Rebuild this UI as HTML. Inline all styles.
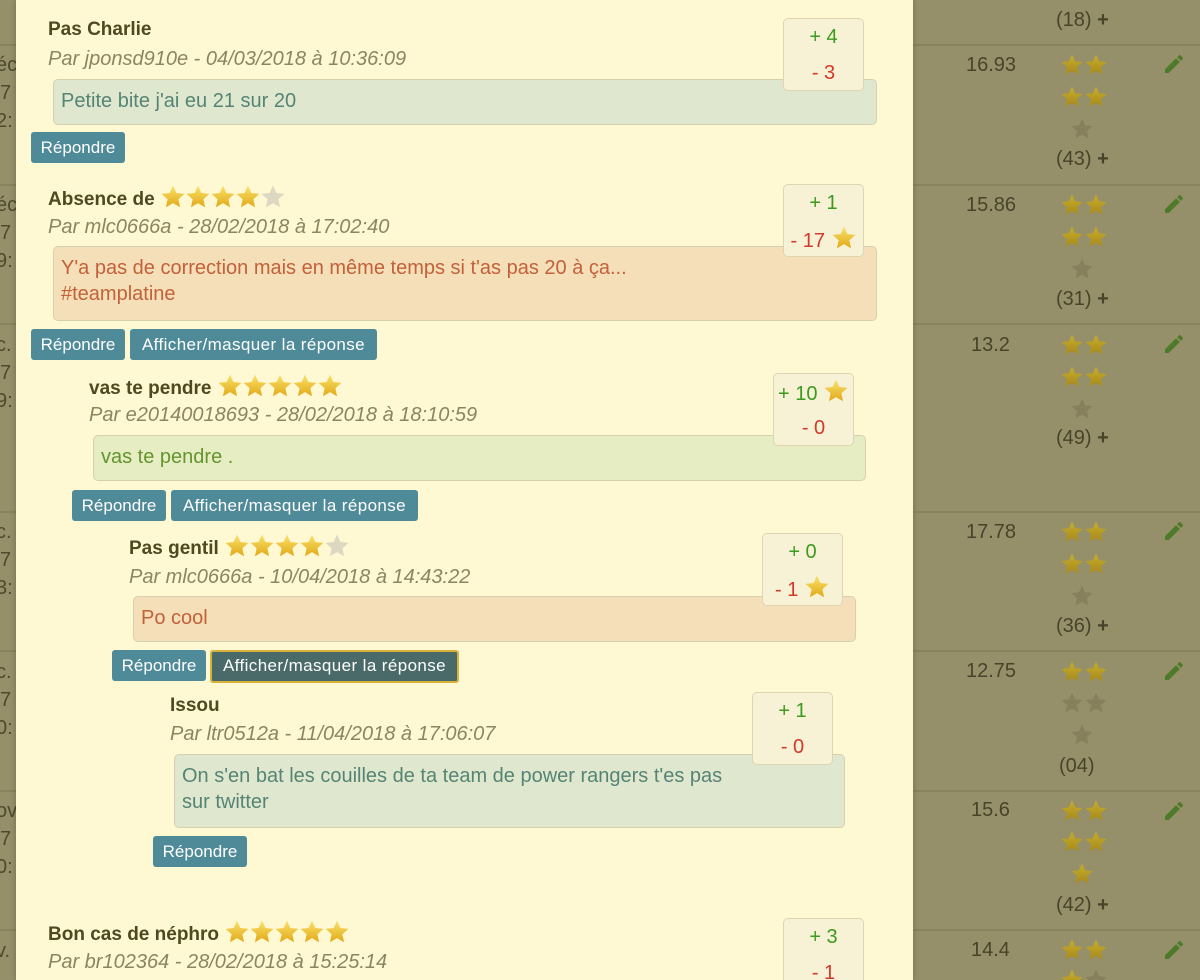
<!DOCTYPE html>
<html><head><meta charset="utf-8"><style>
*{box-sizing:border-box;margin:0;padding:0}
html{width:1200px;height:980px;overflow:hidden}
body{width:1200px;height:980px;overflow:hidden;background:#96906a;font-family:"Liberation Sans",sans-serif;position:relative}
.a{position:absolute;white-space:nowrap}
.modal{position:absolute;left:16px;top:0;width:897px;height:980px;background:#fef8d3;box-shadow:0 0 6px rgba(0,0,0,.25)}
.t{font-weight:bold;font-size:19px;color:#4f4920;line-height:24px}
.t svg{width:26px;height:26px;vertical-align:-5px;margin-right:-1px}
.m{font-style:italic;font-size:20px;color:#8b8560;line-height:24px}
.box{position:absolute;border:1px solid #d6d0ae;border-radius:5px;font-size:20px;line-height:26px;padding:8px 7px;white-space:nowrap;overflow:hidden}
.gb{background:#dfe8cf;color:#558475}
.ob{background:#f5dfb8;color:#c2613a}
.lb{background:#e6edc2;color:#64952e}
.btn{position:absolute;height:31px;background:#4f8a99;color:#fff;font-size:17px;line-height:31px;text-align:center;border-radius:3px;white-space:nowrap}
.b1{width:94px}
.b2{width:247px;letter-spacing:.4px}
.dk{background:#496a69;border:2px solid #d9b23d;line-height:27px}
.v{position:absolute;width:81px;height:73px;background:#f7f1d6;border:1px solid #ddd6b1;border-radius:5px;text-align:center;font-size:20px;white-space:nowrap}
.v .p{position:absolute;top:7px;left:0;right:0;color:#3c9a1f}
.v .n{position:absolute;top:43px;left:0;right:0;color:#d23a2a}
.v svg{width:26px;height:26px;vertical-align:-4px}
.gold{fill:url(#gg)}
.grey{fill:#dcd8c1}
.dg{fill:url(#dgg)}
.dgr{fill:#86815c}
.r{position:absolute;font-size:20px;color:#48442a}
.sep{position:absolute;left:913px;width:287px;height:2px;background:#8a845e}
.st{position:absolute;width:24px;height:24px}
.cnt{position:absolute;font-size:20px;color:#48442a}
.pen{position:absolute;width:24px;height:24px}
.lf{position:absolute;left:0;font-size:20px;color:#4e4a2e}
.lsep{position:absolute;left:0;width:16px;height:2px;background:#8a845e}
</style></head><body>
<svg style="position:absolute;width:0;height:0" xmlns="http://www.w3.org/2000/svg"><defs>
<linearGradient id="gg" x1="0" y1="0" x2="0" y2="1"><stop offset="0" stop-color="#f9e36a"/><stop offset="1" stop-color="#e2a818"/></linearGradient>
<linearGradient id="dgg" x1="0" y1="0" x2="0" y2="1"><stop offset="0" stop-color="#c7ae2c"/><stop offset="1" stop-color="#a88a1a"/></linearGradient>
<symbol id="s" viewBox="0 0 24 24"><polygon points="12,1.5 15.1,8.3 22.5,9.1 17,14.1 18.5,21.5 12,17.7 5.5,21.5 7,14.1 1.5,9.1 8.9,8.3" stroke-linejoin="round"/></symbol>
<symbol id="pn" viewBox="0 0 24 24"><path d="M3 17.25V21h3.75L17.81 9.94l-3.75-3.75L3 17.25zM20.71 7.04a1 1 0 000-1.41l-2.34-2.34a1 1 0 00-1.41 0l-1.830 1.83 3.75 3.75 1.83-1.83z" fill="#4e7a2a"/></symbol>
</defs></svg>

<div class="lsep" style="top:44px"></div><div class="lsep" style="top:184px"></div><div class="lsep" style="top:323px"></div><div class="lsep" style="top:511px"></div><div class="lsep" style="top:650px"></div><div class="lsep" style="top:790px"></div><div class="lsep" style="top:929px"></div>
<div class="lf" style="top:54px;left:-4px">éc</div><div class="lf" style="top:82px">7</div><div class="lf" style="top:110px;left:-4px">2:</div>
<div class="lf" style="top:194px;left:-4px">éc</div><div class="lf" style="top:222px">7</div><div class="lf" style="top:250px;left:-4px">9:</div>
<div class="lf" style="top:334px;left:-4px">c.</div><div class="lf" style="top:362px">7</div><div class="lf" style="top:390px;left:-4px">9:</div>
<div class="lf" style="top:521px;left:-4px">c.</div><div class="lf" style="top:549px">7</div><div class="lf" style="top:577px;left:-4px">3:</div>
<div class="lf" style="top:661px;left:-4px">c.</div><div class="lf" style="top:689px">7</div><div class="lf" style="top:717px;left:-4px">0:</div>
<div class="lf" style="top:800px;left:-4px">ov</div><div class="lf" style="top:828px">7</div><div class="lf" style="top:856px;left:-4px">0:</div>
<div class="lf" style="top:940px;left:-4px">v.</div>

<div class="sep" style="top:44px"></div><div class="sep" style="top:184px"></div><div class="sep" style="top:323px"></div><div class="sep" style="top:511px"></div><div class="sep" style="top:650px"></div><div class="sep" style="top:790px"></div><div class="sep" style="top:929px"></div>
<div class="cnt" style="left:1056px;top:9px">(18) <b>+</b></div>

<div class="modal"></div>

<div class="a t" style="left:48px;top:18px">Pas Charlie</div>
<div class="a m" style="left:48px;top:47px">Par jponsd910e - 04/03/2018 à 10:36:09</div>
<div class="box gb" style="left:53px;top:79px;width:824px;height:46px">Petite bite j'ai eu 21 sur 20</div>
<div class="v" style="left:783px;top:18px"><span class="p">+ 4</span><span class="n">- 3</span></div>
<div class="btn b1" style="left:31px;top:132px">Répondre</div>

<div class="a t" style="left:48px;top:184px">Absence de <svg class="gold"><use href="#s"/></svg><svg class="gold"><use href="#s"/></svg><svg class="gold"><use href="#s"/></svg><svg class="gold"><use href="#s"/></svg><svg class="grey"><use href="#s"/></svg></div>
<div class="a m" style="left:48px;top:215px">Par mlc0666a - 28/02/2018 à 17:02:40</div>
<div class="box ob" style="left:53px;top:246px;width:824px;height:75px">Y'a pas de correction mais en même temps si t'as pas 20 à ça...<br>#teamplatine</div>
<div class="v" style="left:783px;top:184px"><span class="p">+ 1</span><span class="n" style="top:40px">- 17 <svg class="gold"><use href="#s"/></svg></span></div>
<div class="btn b1" style="left:31px;top:329px">Répondre</div>
<div class="btn b2" style="left:130px;top:329px">Afficher/masquer la réponse</div>

<div class="a t" style="left:89px;top:373px">vas te pendre <svg class="gold"><use href="#s"/></svg><svg class="gold"><use href="#s"/></svg><svg class="gold"><use href="#s"/></svg><svg class="gold"><use href="#s"/></svg><svg class="gold"><use href="#s"/></svg></div>
<div class="a m" style="left:89px;top:403px">Par e20140018693 - 28/02/2018 à 18:10:59</div>
<div class="box lb" style="left:93px;top:435px;width:773px;height:46px">vas te pendre .</div>
<div class="v" style="left:773px;top:373px"><span class="p" style="top:4px">+ 10 <svg class="gold"><use href="#s"/></svg></span><span class="n">- 0</span></div>
<div class="btn b1" style="left:72px;top:490px">Répondre</div>
<div class="btn b2" style="left:171px;top:490px">Afficher/masquer la réponse</div>

<div class="a t" style="left:129px;top:533px">Pas gentil <svg class="gold"><use href="#s"/></svg><svg class="gold"><use href="#s"/></svg><svg class="gold"><use href="#s"/></svg><svg class="gold"><use href="#s"/></svg><svg class="grey"><use href="#s"/></svg></div>
<div class="a m" style="left:129px;top:565px">Par mlc0666a - 10/04/2018 à 14:43:22</div>
<div class="box ob" style="left:133px;top:596px;width:723px;height:46px">Po cool</div>
<div class="v" style="left:762px;top:533px"><span class="p">+ 0</span><span class="n" style="top:40px">- 1 <svg class="gold"><use href="#s"/></svg></span></div>
<div class="btn b1" style="left:112px;top:650px">Répondre</div>
<div class="btn b2 dk" style="left:210px;top:650px;height:33px;width:249px">Afficher/masquer la réponse</div>

<div class="a t" style="left:170px;top:694px">Issou</div>
<div class="a m" style="left:170px;top:722px">Par ltr0512a - 11/04/2018 à 17:06:07</div>
<div class="box gb" style="left:174px;top:754px;width:671px;height:74px">On s'en bat les couilles de ta team de power rangers t'es pas<br>sur twitter</div>
<div class="v" style="left:752px;top:692px"><span class="p">+ 1</span><span class="n">- 0</span></div>
<div class="btn b1" style="left:153px;top:836px">Répondre</div>

<div class="a t" style="left:48px;top:919px">Bon cas de néphro <svg class="gold"><use href="#s"/></svg><svg class="gold"><use href="#s"/></svg><svg class="gold"><use href="#s"/></svg><svg class="gold"><use href="#s"/></svg><svg class="gold"><use href="#s"/></svg></div>
<div class="a m" style="left:48px;top:950px">Par br102364 - 28/02/2018 à 15:25:14</div>
<div class="v" style="left:783px;top:918px;height:62px;border-bottom:none;border-radius:5px 5px 0 0"><span class="p">+ 3</span><span class="n">- 1</span></div>

<div class="r" style="left:966px;top:54px">16.93</div>
<div class="r" style="left:966px;top:194px">15.86</div>
<div class="r" style="left:971px;top:334px">13.2</div>
<div class="r" style="left:966px;top:521px">17.78</div>
<div class="r" style="left:966px;top:660px">12.75</div>
<div class="r" style="left:971px;top:799px">15.6</div>
<div class="r" style="left:971px;top:939px">14.4</div>

<svg class="st dg" style="left:1060px;top:53px"><use href="#s"/></svg><svg class="st dg" style="left:1084px;top:53px"><use href="#s"/></svg>
<svg class="st dg" style="left:1060px;top:85px"><use href="#s"/></svg><svg class="st dg" style="left:1084px;top:85px"><use href="#s"/></svg>
<svg class="st dgr" style="left:1070px;top:117px"><use href="#s"/></svg>
<div class="cnt" style="left:1056px;top:148px">(43) <b>+</b></div>
<svg class="pen" style="left:1162px;top:52px"><use href="#pn"/></svg>

<svg class="st dg" style="left:1060px;top:193px"><use href="#s"/></svg><svg class="st dg" style="left:1084px;top:193px"><use href="#s"/></svg>
<svg class="st dg" style="left:1060px;top:225px"><use href="#s"/></svg><svg class="st dg" style="left:1084px;top:225px"><use href="#s"/></svg>
<svg class="st dgr" style="left:1070px;top:257px"><use href="#s"/></svg>
<div class="cnt" style="left:1056px;top:288px">(31) <b>+</b></div>
<svg class="pen" style="left:1162px;top:192px"><use href="#pn"/></svg>

<svg class="st dg" style="left:1060px;top:333px"><use href="#s"/></svg><svg class="st dg" style="left:1084px;top:333px"><use href="#s"/></svg>
<svg class="st dg" style="left:1060px;top:365px"><use href="#s"/></svg><svg class="st dg" style="left:1084px;top:365px"><use href="#s"/></svg>
<svg class="st dgr" style="left:1070px;top:397px"><use href="#s"/></svg>
<div class="cnt" style="left:1056px;top:427px">(49) <b>+</b></div>
<svg class="pen" style="left:1162px;top:332px"><use href="#pn"/></svg>

<svg class="st dg" style="left:1060px;top:520px"><use href="#s"/></svg><svg class="st dg" style="left:1084px;top:520px"><use href="#s"/></svg>
<svg class="st dg" style="left:1060px;top:552px"><use href="#s"/></svg><svg class="st dg" style="left:1084px;top:552px"><use href="#s"/></svg>
<svg class="st dgr" style="left:1070px;top:584px"><use href="#s"/></svg>
<div class="cnt" style="left:1056px;top:615px">(36) <b>+</b></div>
<svg class="pen" style="left:1162px;top:519px"><use href="#pn"/></svg>

<svg class="st dg" style="left:1060px;top:660px"><use href="#s"/></svg><svg class="st dg" style="left:1084px;top:660px"><use href="#s"/></svg>
<svg class="st dgr" style="left:1060px;top:691px"><use href="#s"/></svg><svg class="st dgr" style="left:1084px;top:691px"><use href="#s"/></svg>
<svg class="st dgr" style="left:1070px;top:723px"><use href="#s"/></svg>
<div class="cnt" style="left:1059px;top:755px">(04)</div>
<svg class="pen" style="left:1162px;top:659px"><use href="#pn"/></svg>

<svg class="st dg" style="left:1060px;top:799px"><use href="#s"/></svg><svg class="st dg" style="left:1084px;top:799px"><use href="#s"/></svg>
<svg class="st dg" style="left:1060px;top:830px"><use href="#s"/></svg><svg class="st dg" style="left:1084px;top:830px"><use href="#s"/></svg>
<svg class="st dg" style="left:1070px;top:862px"><use href="#s"/></svg>
<div class="cnt" style="left:1056px;top:894px">(42) <b>+</b></div>
<svg class="pen" style="left:1162px;top:799px"><use href="#pn"/></svg>

<svg class="st dg" style="left:1060px;top:938px"><use href="#s"/></svg><svg class="st dg" style="left:1084px;top:938px"><use href="#s"/></svg>
<svg class="st dg" style="left:1060px;top:968px"><use href="#s"/></svg><svg class="st dgr" style="left:1084px;top:968px"><use href="#s"/></svg>
<svg class="pen" style="left:1162px;top:938px"><use href="#pn"/></svg>
</body></html>
